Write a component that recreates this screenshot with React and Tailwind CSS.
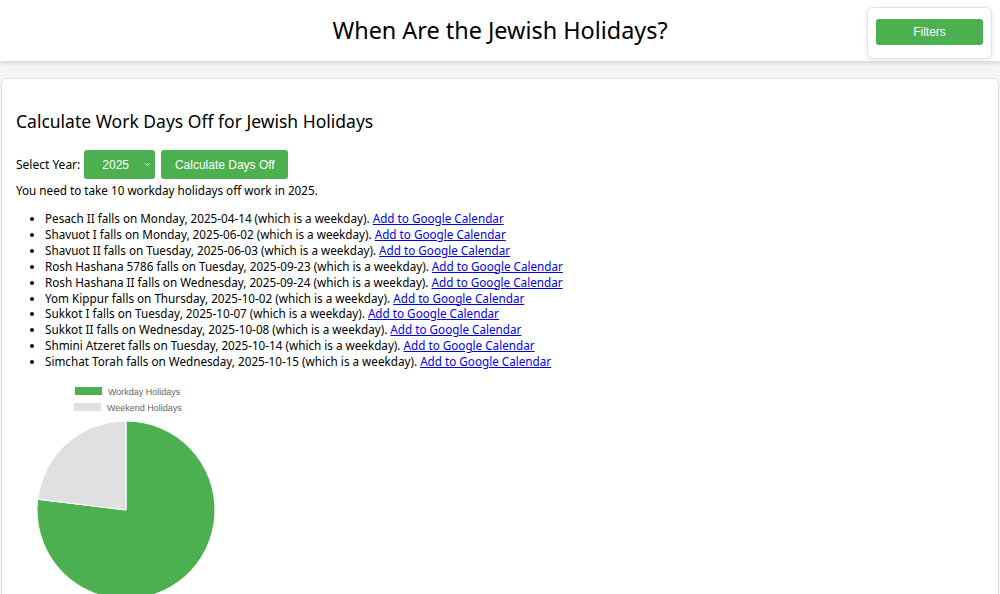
import React, { useState } from "react";

const holidays = [
  { name: "Pesach II", day: "Monday", date: "2025-04-14" },
  { name: "Shavuot I", day: "Monday", date: "2025-06-02" },
  { name: "Shavuot II", day: "Tuesday", date: "2025-06-03" },
  { name: "Rosh Hashana 5786", day: "Tuesday", date: "2025-09-23" },
  { name: "Rosh Hashana II", day: "Wednesday", date: "2025-09-24" },
  { name: "Yom Kippur", day: "Thursday", date: "2025-10-02" },
  { name: "Sukkot I", day: "Tuesday", date: "2025-10-07" },
  { name: "Sukkot II", day: "Wednesday", date: "2025-10-08" },
  { name: "Shmini Atzeret", day: "Tuesday", date: "2025-10-14" },
  { name: "Simchat Torah", day: "Wednesday", date: "2025-10-15" },
];

const PieChart = ({ work, weekend }) => {
  const cx = 110;
  const cy = 129;
  const r = 89;
  const total = work + weekend;
  const a = (work / total) * Math.PI * 2;
  const x = cx + r * Math.sin(a);
  const y = cy - r * Math.cos(a);
  return (
    <svg width="240" height="230" viewBox="0 0 240 230" className="block">
      <rect x="59" y="6" width="27" height="8" fill="#4caf50" />
      <text x="92" y="13.5" fontSize="9" fill="#666" fontFamily="Liberation Sans, Arial, sans-serif">
        Workday Holidays
      </text>
      <rect x="58" y="22" width="27" height="8" fill="#e0e0e0" />
      <text x="91" y="29.5" fontSize="9" fill="#666" fontFamily="Liberation Sans, Arial, sans-serif">
        Weekend Holidays
      </text>
      <path
        d={`M${cx} ${cy} L${cx} ${cy - r} A${r} ${r} 0 ${a > Math.PI ? 1 : 0} 1 ${x} ${y} Z`}
        fill="#4caf50"
        stroke="#fff"
        strokeWidth="1"
      />
      <path
        d={`M${cx} ${cy} L${x} ${y} A${r} ${r} 0 ${a > Math.PI ? 0 : 1} 1 ${cx} ${cy - r} Z`}
        fill="#e0e0e0"
        stroke="#fff"
        strokeWidth="1"
      />
    </svg>
  );
};

const App = () => {
  const [year, setYear] = useState("2025");

  return (
    <div className="min-h-[594px] bg-[#f4f4f4] text-black" style={{ fontFamily: "'Noto Sans', 'Open Sans', sans-serif" }}>
      <header className="relative h-[61px] bg-white shadow-[0_2px_4px_rgba(0,0,0,0.12)] flex items-center justify-center">
        <h1 className="text-[23.4px] leading-none">When Are the Jewish Holidays?</h1>
        <div className="absolute right-[8px] top-[7px] w-[125px] h-[52px] bg-white border border-[#e2e2e2] rounded-md shadow-[0_1px_4px_rgba(0,0,0,0.1)] pt-[10px] px-[8px]">
          <button
            className="w-full h-[26px] bg-[#4caf50] text-white text-[12px] rounded-[3px]"
            style={{ fontFamily: "'Liberation Sans', Arial, sans-serif" }}
          >
            Filters
          </button>
        </div>
      </header>

      <main className="pt-[17px] px-[1px]">
        <section className="bg-white border border-[#e0e0e0] rounded-md px-[14px] pt-[28px] pb-6 min-h-[520px]">
          <h2 className="text-[17.5px] leading-[28px] mb-[15px]">Calculate Work Days Off for Jewish Holidays</h2>

          <div className="flex items-center text-[12px]">
            <span className="mr-[4px]">Select Year:</span>
            <div className="relative">
              <select
                value={year}
                onChange={(e) => setYear(e.target.value)}
                className="appearance-none w-[71px] h-[29px] bg-[#4caf50] text-white text-[12px] rounded-[3px] pl-[18px]"
                style={{ fontFamily: "'Liberation Sans', Arial, sans-serif" }}
              >
                <option>2024</option>
                <option>2025</option>
                <option>2026</option>
              </select>
              <svg className="absolute right-[4px] top-[12px] pointer-events-none" width="7" height="5" viewBox="0 0 7 5">
                <path d="M1 1 L3.5 3.5 L6 1" stroke="#e8f5e9" strokeWidth="1" fill="none" />
              </svg>
            </div>
            <button
              className="ml-[6px] w-[127px] h-[29px] bg-[#4caf50] text-white text-[12px] rounded-[3px]"
              style={{ fontFamily: "'Liberation Sans', Arial, sans-serif" }}
            >
              Calculate Days Off
            </button>
          </div>

          <p className="text-[11.7px] leading-[20px] mt-[1px]">You need to take 10 workday holidays off work in 2025.</p>

          <ul className="list-disc pl-[29px] mt-[11px] text-[11.7px] leading-[15.9px]">
            {holidays.map((h) => (
              <li key={h.date}>
                {h.name} falls on {h.day}, {h.date} (which is a weekday).{" "}
                <a href="#" className="text-[#0000ee] underline">
                  Add to Google Calendar
                </a>
              </li>
            ))}
          </ul>

          <div className="mt-[11px]">
            <PieChart work={10} weekend={3} />
          </div>
        </section>
      </main>
    </div>
  );
};

export default App;
